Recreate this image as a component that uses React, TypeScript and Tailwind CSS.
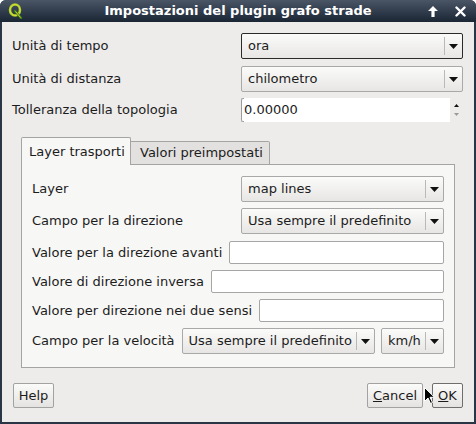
import type { ReactNode } from "react";

const font = { fontFamily: '"DejaVu Sans", Verdana, sans-serif' };

function Arrow({ gray }: { gray?: boolean }) {
  return (
    <svg width="9" height="5" viewBox="0 0 9 5">
      <path d="M0 0 H9 L4.5 5 Z" fill={gray ? "#8a8a8a" : "#111"} />
    </svg>
  );
}

function Combo({
  value,
  className = "",
  focused,
}: {
  value: string;
  className?: string;
  focused?: boolean;
}) {
  return (
    <div
      className={`flex h-[26px] items-center rounded-[2px] border bg-linear-to-b from-[#fbfbfa] to-[#e7e6e4] pl-[6px] ${
        focused ? "border-[#2a2a2a]" : "border-[#a9a9a9]"
      } ${className}`}
    >
      <span className="flex-1 truncate">{value}</span>
      <div className="h-[18px] w-px bg-[#b9b9b9]" />
      <div className="flex w-[17px] items-center justify-center">
        <Arrow />
      </div>
    </div>
  );
}

function Field({ className = "" }: { className?: string }) {
  return (
    <div
      className={`h-[23px] rounded-[2px] border border-[#a6a6a6] bg-white ${className}`}
    />
  );
}

function Row({ label, children, h = "h-[26px]" }: { label: string; children: ReactNode; h?: string }) {
  return (
    <div className={`flex items-center ${h}`}>
      <span className="whitespace-nowrap">{label}</span>
      {children}
    </div>
  );
}

function Button({ children, className = "" }: { children: ReactNode; className?: string }) {
  return (
    <div
      className={`flex h-[25px] items-center justify-center rounded-[2px] border bg-linear-to-b from-[#fbfbfa] to-[#e4e3e1] ${className}`}
    >
      {children}
    </div>
  );
}

export default function App() {
  return (
    <div
      className="relative flex h-[424px] w-[476px] flex-col overflow-hidden rounded-t-[6px] bg-[#2a3646] text-[13px] text-[#1c1c1c]"
      style={font}
    >
      {/* title bar */}
      <div className="relative flex h-[22px] shrink-0 items-center justify-center bg-linear-to-b from-[#4a5566] to-[#1b2635]">
        <svg className="absolute left-[8px] top-[3px]" width="15" height="16" viewBox="0 0 15 16">
          <ellipse cx="7" cy="7" rx="5" ry="5.5" fill="none" stroke="#9fcf2a" strokeWidth="2.6" />
          <ellipse cx="7" cy="7" rx="5" ry="5.5" fill="none" stroke="#e7d93a" strokeWidth="1" />
          <path d="M7 8 L13 15" stroke="#3c7d14" strokeWidth="2.4" strokeLinecap="round" />
          <path d="M7.5 8.5 L12.5 14.5" stroke="#e7d93a" strokeWidth="0.9" />
        </svg>
        <span className="text-[13px] font-bold text-white">
          Impostazioni del plugin grafo strade
        </span>
        <svg className="absolute left-[428px] top-[6px]" width="10" height="11" viewBox="0 0 10 11">
          <path d="M5 0 L10 5 H6.6 V11 H3.4 V5 H0 Z" fill="#fff" />
        </svg>
        <svg className="absolute left-[455px] top-[6px]" width="11" height="11" viewBox="0 0 11 11">
          <path d="M1.5 1.5 L9.5 9.5 M9.5 1.5 L1.5 9.5" stroke="#fff" strokeWidth="2.4" strokeLinecap="round" />
        </svg>
      </div>

      {/* body */}
      <div className="mx-[2px] mb-[2px] flex flex-1 flex-col bg-[#edeceb] pl-[10px] pr-[11px] pt-[11px]">
        <div className="flex h-[26px] items-center">
          <span className="flex-1">Unità di tempo</span>
          <Combo value="ora" focused className="w-[222px]" />
        </div>
        <div className="mt-[7px] flex h-[26px] items-center">
          <span className="flex-1">Unità di distanza</span>
          <Combo value="chilometro" className="w-[222px]" />
        </div>
        <div className="mt-[6px] flex h-[24px] items-center">
          <span className="flex-1">Tolleranza della topologia</span>
          <div className="flex h-[24px] w-[222px] items-center">
            <div className="flex h-full flex-1 items-center bg-white">
              <div className="h-full w-[3px] rounded-l-[2px] border border-r-0 border-[#9c9c9c]" />
              <span>0.00000</span>
            </div>
            <div className="flex h-full w-[13px] flex-col items-center justify-center gap-[6px]">
              <svg width="5" height="3" viewBox="0 0 5 3">
                <path d="M0 3 H5 L2.5 0 Z" fill="#111" />
              </svg>
              <svg width="5" height="3" viewBox="0 0 5 3">
                <path d="M0 0 H5 L2.5 3 Z" fill="#9a9a9a" />
              </svg>
            </div>
          </div>
        </div>

        {/* tab widget */}
        <div className="ml-[9px] mr-[8px] mt-[15px] flex flex-col">
          <div className="relative z-10 -mb-px flex h-[28px] items-end">
            <div className="flex h-[28px] w-[110px] items-center rounded-t-[2px] border border-b-0 border-[#a4a4a4] bg-[#f7f7f6] pl-[7px]">
              Layer trasporti
            </div>
            <div className="flex h-[24px] w-[139px] items-center rounded-tr-[2px] border border-l-0 border-[#a4a4a4] bg-[#e2e1df] pl-[9px]">
              Valori preimpostati
            </div>
          </div>
          <div className="flex h-[204px] flex-col border border-[#a4a4a4] bg-[#f7f7f6] px-[10px] pt-[11px]">
            <div className="flex h-[26px] items-center">
              <span className="flex-1">Layer</span>
              <Combo value="map lines" className="w-[203px]" />
            </div>
            <div className="mt-[6px] flex h-[26px] items-center">
              <span className="flex-1">Campo per la direzione</span>
              <Combo value="Usa sempre il predefinito" className="w-[203px]" />
            </div>
            <Row label="Valore per la direzione avanti" h="mt-[7px] h-[23px]">
              <Field className="ml-[7px] flex-1" />
            </Row>
            <Row label="Valore di direzione inversa" h="mt-[6px] h-[23px]">
              <Field className="ml-[7px] flex-1" />
            </Row>
            <Row label="Valore per direzione nei due sensi" h="mt-[6px] h-[23px]">
              <Field className="ml-[7px] flex-1" />
            </Row>
            <Row label="Campo per la velocità" h="mt-[6px] h-[26px]">
              <Combo value="Usa sempre il predefinito" className="ml-[7px] flex-1" />
              <Combo value="km/h" className="ml-[6px] w-[63px]" />
            </Row>
          </div>
        </div>

        {/* buttons */}
        <div className="mt-[15px] flex items-center">
          <Button className="ml-[1px] w-[41px] border-[#a2a2a2]">Help</Button>
          <div className="flex-1" />
          <Button className="w-[56px] border-[#a2a2a2]">
            <span>
              <u>C</u>ancel
            </span>
          </Button>
          <Button className="ml-[9px] w-[31px] border-[#6e6e6e]">
            <span>
              <u>O</u>K
            </span>
          </Button>
        </div>
      </div>

      {/* mouse pointer */}
      <svg className="absolute left-[424px] top-[387px]" width="11" height="18" viewBox="0 0 11 18">
        <path
          d="M0.5 0.5 V14.5 L4 11 L6.5 16.5 L8.5 15.5 L6 10.3 H10.5 Z"
          fill="#000"
          stroke="#fff"
          strokeWidth="1"
        />
      </svg>
    </div>
  );
}
